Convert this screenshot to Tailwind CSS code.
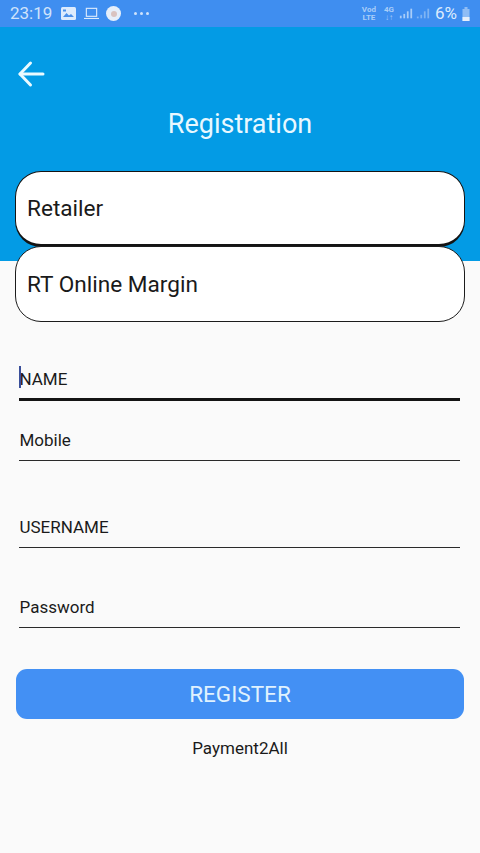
<!DOCTYPE html>
<html lang="en">
<head>
<meta charset="utf-8"/>
<title>Registration</title>
<script src="https://cdn.jsdelivr.net/npm/@tailwindcss/browser@4"></script>
</head>
<body class="w-[480px] h-[853px] overflow-hidden bg-[#fafafa] font-['Roboto',sans-serif] text-[#1a1a1a]">
  <!-- status bar -->
  <div class="h-[27px] bg-[#3f8ef0] flex items-center pl-[10px] pr-[9px] text-[#cfe3fb]">
    <span class="text-[17px] leading-none w-[43px]">23:19</span>
    <svg class="ml-[8px]" width="15" height="13" viewBox="0 0 15 13"><rect x="0" y="0" width="15" height="13" rx="1.5" fill="#dcebfd"/><path d="M2 10l3.500-4 2.500 2.500 2-1.500 3 3z" fill="#4a90ea"/><rect x="2" y="2.500" width="3" height="2" fill="#4a90ea"/></svg>
    <svg class="ml-[8px]" width="15" height="13" viewBox="0 0 16 13" fill="none" stroke="#dcebfd" stroke-width="1.200"><rect x="2.500" y="1" width="11" height="8.500"/><path d="M0 11.800h16"/></svg>
    <div class="ml-[7px] w-[15px] h-[15px] rounded-full bg-[#e6effa] flex items-center justify-center"><div class="w-[6px] h-[6px] rounded-full bg-[#d9c3c0]"></div></div>
    <div class="ml-[13px] flex gap-[3px]"><div class="w-[3px] h-[3px] rounded-full bg-[#cfe3fb]"></div><div class="w-[3px] h-[3px] rounded-full bg-[#cfe3fb]"></div><div class="w-[3px] h-[3px] rounded-full bg-[#cfe3fb]"></div></div>
    <div class="ml-auto flex items-center">
      <div class="text-[8px] leading-[8px] font-bold text-center text-[#a9cdf8]">Vod<br/>LTE</div>
      <div class="ml-[8px] text-[8px] leading-[8px] font-bold text-center text-[#a9cdf8]">4G<br/>↓↑</div>
      <svg class="ml-[5px]" width="14" height="13" viewBox="0 0 16 13" fill="#a9cdf8"><rect x="1" y="9" width="2" height="3"/><rect x="5" y="7" width="2" height="5"/><rect x="9" y="4" width="2" height="8"/><rect x="13" y="1" width="2" height="11"/></svg>
      <svg class="ml-[3px]" width="14" height="13" viewBox="0 0 16 13" fill="#7fb4f3"><rect x="1" y="10" width="2" height="2"/><rect x="5" y="8" width="2" height="4"/><rect x="9" y="4" width="2" height="8"/><rect x="13" y="1" width="2" height="11"/></svg>
      <span class="ml-[5px] text-[17px] leading-none text-[#dcebfd]">6%</span>
      <svg class="ml-[4px]" width="10" height="14" viewBox="0 0 10 14"><path d="M3.500 0h3v2h2v12h-7v-12h2z" fill="#8fbdf5"/><rect x="1.500" y="10" width="7" height="4" fill="#e6effa"/></svg>
    </div>
  </div>

  <!-- blue header -->
  <div class="h-[234px] bg-[#039be5] pt-[33px] text-white">
    <svg class="ml-[17px] block" width="28" height="28" viewBox="0 0 28 28" fill="none" stroke="#eafaff" stroke-width="3" stroke-linecap="round" stroke-linejoin="round"><path d="M26 14H3"/><path d="M13.500 3 3 14l10.500 11"/></svg>
    <h1 class="mt-[20px] text-center text-[27px] leading-[32px] text-[#e8f8ff]">Registration</h1>
  </div>

  <!-- dropdown boxes overlap the header edge -->
  <div class="relative mt-[-90px] px-[15px]">
    <div class="h-[76px] rounded-[26px] border-[1.500px] border-b-[3px] border-[#141414] bg-white flex items-center pl-[11px] pt-[2px] text-[22.600px]">Retailer</div>
    <div class="mt-[-1px] h-[76px] rounded-[26px] border-[1.500px] border-[#1c1c1c] bg-white flex items-center pl-[11px] pt-[2px] text-[22.600px]">RT Online Margin</div>
  </div>

  <!-- form -->
  <div class="pl-[19px] pr-[20px]">
    <div class="relative mt-[37px] h-[42px] border-b-[3px] border-[#141414] flex items-center text-[17px] pl-[0.5px] pt-[2px]">
      <div class="absolute left-0 top-[7px] w-[2px] h-[22px] bg-[#3a4f9a]"></div>
      NAME
    </div>
    <div class="mt-[18px] h-[42px] border-b-[1.500px] border-[#2a2a2a] flex items-center text-[17px] pl-[0.5px] pt-[2px]">Mobile</div>
    <div class="mt-[45px] h-[42px] border-b-[1.500px] border-[#2a2a2a] flex items-center text-[17px] pl-[0.5px] pt-[2px]">USERNAME</div>
    <div class="mt-[38px] h-[42px] border-b-[1.500px] border-[#2a2a2a] flex items-center text-[17px] pl-[0.5px] pt-[2px]">Password</div>
  </div>

  <div class="px-[16px] mt-[41px]">
    <div class="h-[50px] rounded-[11px] bg-[#4390f4] flex items-center justify-center pt-[2px] text-[22.500px] text-[#e0f2fe]">REGISTER</div>
  </div>
  <p class="mt-[19px] text-center text-[17px] leading-[20px]">Payment2All</p>
</body>
</html>
